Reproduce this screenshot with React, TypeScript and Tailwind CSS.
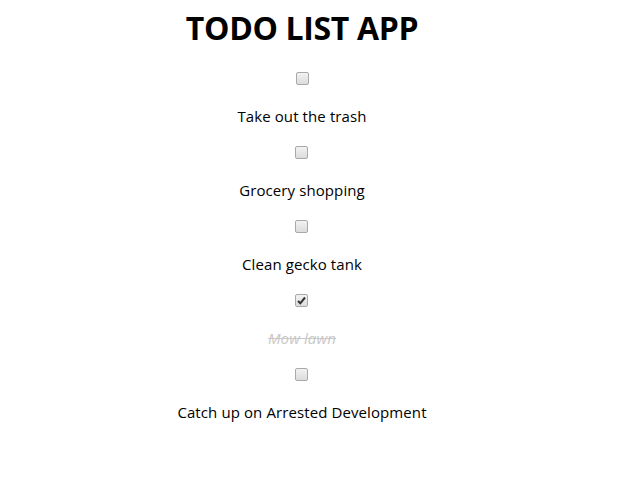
import React from 'react';

const TODOS = [
  { id: 1, text: 'Take out the trash', done: false },
  { id: 2, text: 'Grocery shopping', done: false },
  { id: 3, text: 'Clean gecko tank', done: false },
  { id: 4, text: 'Mow lawn', done: true },
  { id: 5, text: 'Catch up on Arrested Development', done: false },
];

const Box: React.FC<{ checked: boolean }> = ({ checked }) => (
  <span className="flex h-[13px] w-[13px] items-center justify-center rounded-[2px] border border-[#a9a9a9] bg-gradient-to-b from-[#f2f2f2] to-[#dcdcdc]">
    {checked && (
      <svg width="9" height="9" viewBox="0 0 9 9">
        <path d="M1 5 L3.3 7.3 L8 1.5" fill="none" stroke="#333" strokeWidth="2" />
      </svg>
    )}
  </span>
);

const App: React.FC = () => {
  return (
    <div className="w-[604px] bg-white font-['Open_Sans',sans-serif] text-black">
      <h1 className="pt-[8px] text-center text-[32px] font-bold leading-[40px] tracking-[-0.35px]">TODO LIST APP</h1>
      <ul className="mt-[20px] flex flex-col items-center">
        {TODOS.map((todo) => (
          <li key={todo.id} className="flex h-[74px] flex-col items-center">
            <div className="flex h-[20px] items-center">
              <Box checked={todo.done} />
            </div>
            <p
              className={
                'mt-[17px] text-[15px] leading-[22px] tracking-[0.1px] ' +
                (todo.done ? 'italic text-[#c8c8c8] line-through' : '')
              }
            >
              {todo.text}
            </p>
          </li>
        ))}
      </ul>
    </div>
  );
};

export default App;
